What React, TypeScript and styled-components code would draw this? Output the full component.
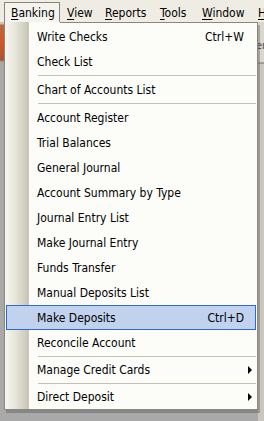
import React from "react";
import styled, { createGlobalStyle } from "styled-components";

const GlobalStyle = createGlobalStyle`
  html, body {
    margin: 0;
    padding: 0;
    background: #a9a9a9;
  }
  body {
    font-family: "DejaVu Sans Condensed", "Liberation Sans", sans-serif;
    font-size: 12px;
    color: #000;
  }
`;

const Screen = styled.div`
  width: 264px;
  height: 421px;
  overflow: hidden;
  background: #a9a9a9;
  display: flex;
  flex-direction: column;
`;

const MenuBar = styled.div`
  height: 22px;
  flex: none;
  display: flex;
  align-items: flex-end;
  background: #eeece3;
  padding-left: 4px;
  white-space: nowrap;
  overflow: hidden;
`;

const BarItem = styled.div<{ $open?: boolean; $w: number }>`
  box-sizing: border-box;
  width: ${(p) => p.$w}px;
  height: 20px;
  padding-left: 6px;
  line-height: 20px;
  flex: none;
  border: 1px solid ${(p) => (p.$open ? "#8a867a" : "transparent")};
  border-bottom: none;
  background: ${(p) => (p.$open ? "#f4f3ed" : "transparent")};
`;

const Key = styled.span`
  text-decoration: underline;
  text-underline-offset: 2px;
`;

const Stage = styled.div`
  flex: 1;
  display: flex;
  align-items: flex-start;
`;

const LeftStrip = styled.div`
  width: 4px;
  align-self: stretch;
  flex: none;
  background: linear-gradient(
    to bottom,
    #c8c6bc 0px,
    #c8c6bc 2px,
    #b86a3c 3px,
    #d0562a 20px,
    #a8543a 38px,
    #a9a9a9 40px,
    #a9a9a9 100%
  );
`;

const RightStrip = styled.div`
  flex: 1;
  align-self: stretch;
  background: linear-gradient(
    to bottom,
    #d8d6cd 0px,
    #d8d6cd 40px,
    #6e6e6e 41px,
    #c8c6bf 42px,
    #c8c6bf 100%
  );
  position: relative;
  overflow: hidden;
`;

const PeekText = styled.span`
  position: absolute;
  top: 17px;
  left: -2px;
  color: #4a4a4a;
  font-size: 11px;
`;

const Dropdown = styled.div`
  box-sizing: border-box;
  width: 254px;
  flex: none;
  position: relative;
  border: 1px solid #8a867a;
  border-top: none;
  background: #fcfcf9;
  padding: 2px 1px 0 1px;
  box-shadow: 2px 3px 0 rgba(70, 70, 70, 0.35);
  z-index: 1;
`;

const TopEdge = styled.div`
  position: absolute;
  top: 0;
  left: 55px;
  right: -1px;
  height: 1px;
  background: #8a867a;
`;

const Gutter = styled.div`
  position: absolute;
  top: 0;
  bottom: 0;
  left: 0;
  width: 24px;
  background: linear-gradient(to right, #f7f7f2 0%, #e8e7dc 40%, #c6c5b4 100%);
`;

const List = styled.div`
  position: relative;
  display: flex;
  flex-direction: column;
`;

const Item = styled.div<{ $active?: boolean }>`
  box-sizing: border-box;
  height: 25px;
  display: flex;
  align-items: center;
  padding-left: 30px;
  padding-right: 3px;
  border: 1px solid ${(p) => (p.$active ? "#316ac5" : "transparent")};
  background: ${(p) => (p.$active ? "#c1d2ee" : "transparent")};
`;

const Label = styled.span`
  flex: 1;
  white-space: nowrap;
`;

const Shortcut = styled.span`
  margin-right: 8px;
  white-space: nowrap;
`;

const Arrow = styled.span`
  width: 0;
  height: 0;
  border-top: 4px solid transparent;
  border-bottom: 4px solid transparent;
  border-left: 4px solid #000;
`;

const Separator = styled.div<{ $h: number }>`
  height: ${(p) => p.$h}px;
  display: flex;
  align-items: center;
  padding-left: 32px;
  &::after {
    content: "";
    flex: 1;
    height: 1px;
    background: #c5c2b2;
  }
`;

type Entry =
  | { kind: "item"; label: string; shortcut?: string; sub?: boolean; active?: boolean }
  | { kind: "sep"; h: number };

const entries: Entry[] = [
  { kind: "item", label: "Write Checks", shortcut: "Ctrl+W" },
  { kind: "item", label: "Check List" },
  { kind: "sep", h: 3 },
  { kind: "item", label: "Chart of Accounts List" },
  { kind: "sep", h: 3 },
  { kind: "item", label: "Account Register" },
  { kind: "item", label: "Trial Balances" },
  { kind: "item", label: "General Journal" },
  { kind: "item", label: "Account Summary by Type" },
  { kind: "item", label: "Journal Entry List" },
  { kind: "item", label: "Make Journal Entry" },
  { kind: "item", label: "Funds Transfer" },
  { kind: "item", label: "Manual Deposits List" },
  { kind: "item", label: "Make Deposits", shortcut: "Ctrl+D", active: true },
  { kind: "item", label: "Reconcile Account" },
  { kind: "sep", h: 2 },
  { kind: "item", label: "Manage Credit Cards", sub: true },
  { kind: "sep", h: 2 },
  { kind: "item", label: "Direct Deposit", sub: true },
];

const bar = [
  { key: "B", rest: "anking", w: 56, open: true },
  { key: "V", rest: "iew", w: 38 },
  { key: "R", rest: "eports", w: 55 },
  { key: "T", rest: "ools", w: 42 },
  { key: "W", rest: "indow", w: 56 },
  { key: "H", rest: "", w: 12 },
];

export default function App() {
  return (
    <Screen>
      <GlobalStyle />
      <MenuBar>
        {bar.map((b) => (
          <BarItem key={b.key} $open={b.open} $w={b.w}>
            <Key>{b.key}</Key>
            {b.rest}
          </BarItem>
        ))}
      </MenuBar>
      <Stage>
        <LeftStrip />
        <Dropdown>
          <TopEdge />
          <Gutter />
          <List>
            {entries.map((e, i) =>
              e.kind === "sep" ? (
                <Separator key={i} $h={e.h} />
              ) : (
                <Item key={i} $active={e.active}>
                  <Label>{e.label}</Label>
                  {e.shortcut && <Shortcut>{e.shortcut}</Shortcut>}
                  {e.sub && <Arrow />}
                </Item>
              )
            )}
          </List>
        </Dropdown>
        <RightStrip>
          <PeekText>er</PeekText>
        </RightStrip>
      </Stage>
    </Screen>
  );
}
